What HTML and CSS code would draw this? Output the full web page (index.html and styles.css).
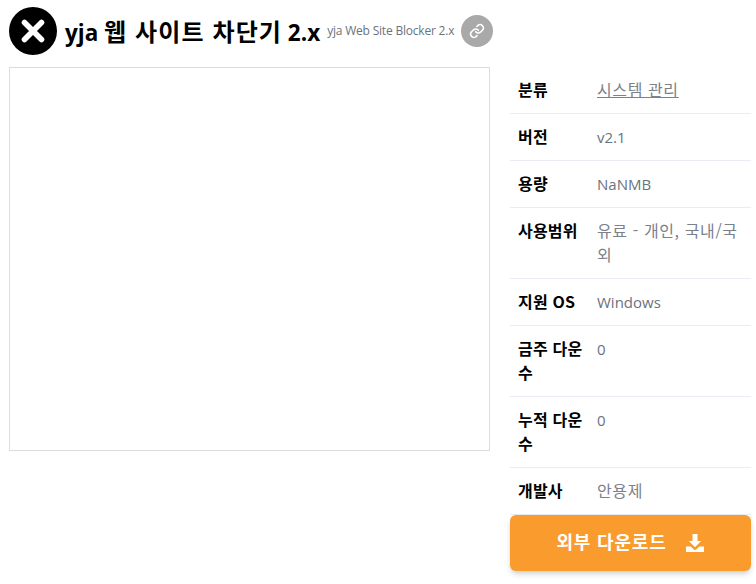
FILE: index.html
```html
<!DOCTYPE html>
<html lang="ko">
<head>
<meta charset="utf-8">
<title>yja 웹 사이트 차단기 2.x</title>
<link rel="stylesheet" href="styles.css">
</head>
<body>
<header class="head">
  <svg class="logo" viewBox="0 0 48 48" width="48" height="48">
    <circle cx="24" cy="24" r="24" fill="#000"/>
    <path d="M15.5 15.5L32.5 32.5M32.5 15.5L15.5 32.5" stroke="#fff" stroke-width="5.6" stroke-linecap="round" fill="none"/>
  </svg>
  <h1 class="title">yja <span class="title-ko">웹 사이트 차단기</span> 2.x</h1>
  <span class="sub">yja Web Site Blocker 2.x</span>
  <a class="link" href="#">
    <svg viewBox="0 0 24 24" width="16" height="16" fill="none" stroke="#fff" stroke-width="2.4" stroke-linecap="round" stroke-linejoin="round">
      <path d="M10 13a5 5 0 0 0 7.5.5l3-3a5 5 0 0 0-7-7l-1.7 1.7"/>
      <path d="M14 11a5 5 0 0 0-7.5-.5l-3 3a5 5 0 0 0 7 7l1.7-1.7"/>
    </svg>
  </a>
</header>
<main class="main">
  <div class="shot"></div>
  <aside class="side">
    <dl class="info">
      <div class="row"><dt>분류</dt><dd class="ko"><a href="#">시스템 관리</a></dd></div>
      <div class="row"><dt>버전</dt><dd>v2.1</dd></div>
      <div class="row"><dt>용량</dt><dd>NaNMB</dd></div>
      <div class="row"><dt>사용범위</dt><dd class="ko">유료 - 개인, 국내/국외</dd></div>
      <div class="row"><dt>지원 OS</dt><dd>Windows</dd></div>
      <div class="row"><dt>금주 다운수</dt><dd>0</dd></div>
      <div class="row"><dt>누적 다운수</dt><dd>0</dd></div>
      <div class="row"><dt>개발사</dt><dd class="ko">안용제</dd></div>
    </dl>
    <a class="btn" href="#"><span class="btn-text">외부 다운로드</span>
      <svg viewBox="0 0 20 20" width="20" height="20" fill="#fff">
        <path d="M7.5 1h5v7h3.6L10 14.2 3.9 8h3.6z"/>
        <path d="M1 13.5h4.6l2.6 2.6a2.5 2.5 0 0 0 3.6 0l2.6-2.6H19V19H1z"/>
      </svg>
    </a>
  </aside>
</main>
</body>
</html>
```

FILE: styles.css
```css
* { box-sizing: border-box; }
html, body { margin: 0; padding: 0; background: #fff; }
body {
  width: 756px;
  height: 584px;
  overflow: hidden;
  padding: 7px 5px 0 9px;
  font-family: "Noto Sans CJK KR", "Open Sans", sans-serif;
  font-size: 16px;
  line-height: 24px;
  color: #000;
}
.head {
  display: flex;
  align-items: center;
  height: 48px;
}
.logo { flex: none; }
.title {
  margin: 2px 0 0 8px;
  font-size: 22.5px;
  line-height: 32px;
  font-weight: 700;
  font-family: "Open Sans", "Noto Sans CJK KR", sans-serif;
}
.title-ko {
  font-family: "Noto Sans CJK KR", sans-serif;
  font-size: 24px;
  font-weight: 700;
  letter-spacing: 1.1px;
}
.sub {
  margin: 0 0 0 7px;
  font-size: 12px;
  letter-spacing: -.2px;
  color: #6b7280;
  font-family: "Open Sans", sans-serif;
}
.link {
  margin-left: 7px;
  width: 32px;
  height: 32px;
  border-radius: 50%;
  background: #a9a9a9;
  display: flex;
  align-items: center;
  justify-content: center;
}
.main {
  display: flex;
  gap: 20px;
  margin-top: 12px;
}
.shot {
  flex: none;
  width: 481px;
  height: 384px;
  border: 1px solid #dcdcdc;
}
.side { width: 241px; flex: none; }
.info { margin: 0; }
.row {
  display: flex;
  padding: 11px 0 11px 8px;
  border-bottom: 1px solid #e9edf3;
}
.row dt {
  flex: none;
  width: 79px;
  margin: -1px 0 1px;
  padding-right: 8px;
  font-weight: 700;
  font-size: 16px;
  letter-spacing: .2px;
  word-break: break-all;
}
.row dd {
  margin: 0;
  flex: 1;
  min-width: 0;
  font-size: 15px;
  color: #6b7280;
  font-family: "Open Sans", "Noto Sans CJK KR", sans-serif;
}
.row dd.ko {
  margin: -1px 0 1px;
  font-family: "Noto Sans CJK KR", sans-serif;
  font-size: 16px;
  font-weight: 400;
  letter-spacing: .6px;
  word-break: break-all;
  color: #7b808a;
}
.row dd a { color: inherit; }
.btn {
  display: flex;
  align-items: center;
  justify-content: center;
  gap: 18px;
  height: 56px;
  border-radius: 6px;
  background: #f99b2d;
  color: #fff;
  font-weight: 700;
  font-size: 18px;
  letter-spacing: .8px;
  text-decoration: none;
  box-shadow: 0 4px 6px -1px rgba(0,0,0,.15), 0 2px 4px -1px rgba(0,0,0,.08);
}
.btn-text { margin-bottom: 4px; }
```
